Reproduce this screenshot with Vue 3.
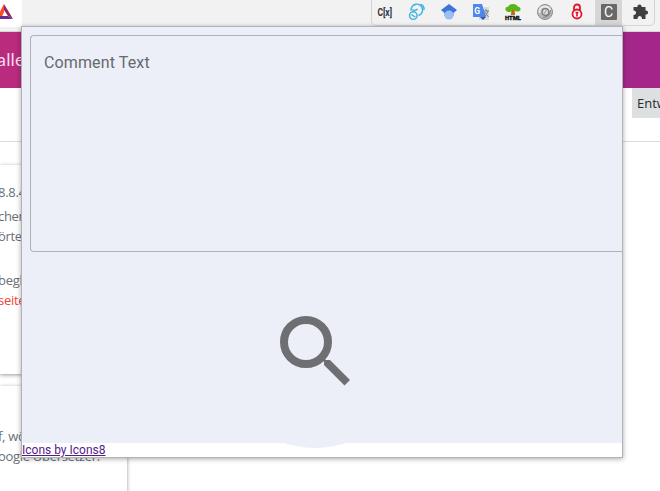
<script setup>
const release = [
  { text: '8.8.4', cls: 'version' },
  { text: 'chen', cls: 'l2' },
  { text: 'örter', cls: 'l3' },
  { text: 'begl', cls: 'l4' },
  { text: 'seite', cls: 'link' },
]
</script>

<template>
  <div class="screen">
    <header class="browser">
      <div class="address">
        <svg class="bat" width="14" height="22" viewBox="0 0 14 22">
          <path d="M4 4L-4 19H1L4 12Z" fill="#ff4b25" />
          <path d="M4 4L13 19L8 16L4 10Z" fill="#9e1f63" />
          <path d="M-4 19L0 16H8L13 19Z" fill="#662d91" />
        </svg>
      </div>
      <div class="extensions">
        <svg class="ext" viewBox="0 0 32 26">
          <text x="5.5" y="15.5" font-family="Roboto" font-size="11.5" font-weight="700" textLength="14.5" lengthAdjust="spacingAndGlyphs" fill="#30343c">C[x]</text>
        </svg>
        <svg class="ext" viewBox="0 0 32 26" fill="none" stroke="#35b2e2" stroke-width="1.4">
          <path d="M7 10.500A5.800 5.800 0 1 1 14.500 15.500" />
          <path d="M8 9.500Q11 11.500 13.500 9M16.500 4.500Q20.500 5.500 20 10" />
          <circle cx="9.300" cy="15.600" r="3.8" />
          <path d="M7.300 14.500L11.300 17" />
        </svg>
        <svg class="ext" viewBox="0 0 32 26">
          <path d="M13 4L21 10L17.5 13V16H8.5V13L5 10Z" fill="#3e74d7" />
          <circle cx="13" cy="15" r="4.6" fill="#9dbdf8" />
        </svg>
        <svg class="ext" viewBox="0 0 32 26">
          <rect x="11" y="7" width="10" height="13" fill="#d9dcdf" />
          <path d="M5 4H14L18 17H5Z" fill="#4d86ed" />
          <path d="M12 17H18L15 20Z" fill="#3451b5" />
          <text x="6.3" y="13.5" font-family="Roboto" font-size="8.5" font-weight="700" fill="#fff">G</text>
          <path d="M15.5 11H21M18 9V11M20 11Q19 15 16 17M16.5 12L20.5 17" fill="none" stroke="#687e85" />
        </svg>
        <svg class="ext" viewBox="0 0 32 26">
          <path d="M11.5 8H14.5L15 15H11Z" fill="#b96b16" />
          <path d="M5.5 10Q5 6.5 8.5 6.5Q9 4 13 4Q17 4 17.5 6.5Q21 7 20.5 10Q19 12.5 15 11L13 9.5L11 11.5Q7 13 5.5 10Z" fill="#5bb41a" />
          <text x="5" y="19.5" font-family="Roboto" font-size="6" font-weight="900" textLength="16" lengthAdjust="spacingAndGlyphs" fill="#111" stroke="#111" stroke-width=".3">HTML</text>
        </svg>
        <svg class="ext" viewBox="0 0 32 26">
          <circle cx="13" cy="12" r="7.5" fill="#b9b9b9" stroke="#8d8d8d" />
          <path d="M7.5 13Q7 6.5 13 6.5Q18 6.5 18.5 12" fill="none" stroke="#ededed" stroke-width="1.8" />
          <circle cx="13.5" cy="12" r="3.3" fill="#ddd" stroke="#777" stroke-width="1.2" />
          <path d="M18.5 10Q18 17 11 17.5" fill="none" stroke="#868686" stroke-width="1.2" />
          <path d="M11.5 14.5L15 9.5" stroke="#999" />
        </svg>
        <svg class="ext" viewBox="0 0 32 26">
          <path d="M10 10V7.5A3 3 0 0 1 16 7.5V10" fill="none" stroke="#e1142c" stroke-width="1.8" />
          <circle cx="13" cy="14" r="4.5" fill="#fff" stroke="#e1142c" stroke-width="1.8" />
          <path d="M11.5 12.5H14.5M13 12V16.5" stroke="#e1142c" stroke-width="1.7" />
        </svg>
        <div class="ext active"><b>C</b></div>
        <svg class="ext puzzle" viewBox="0 0 32 26">
          <path d="M12 7H15.5C14.5 3.5 20.5 3.5 19.500 7H23.500V10.500C27 10 27 15 23.500 14.500V19H20C20 15 15.500 15 15.500 19H11.500V15C15 14.500 15 11 11.500 10.500V7Z" fill="#3c4043" />
        </svg>
      </div>
    </header>

    <div class="banner">alle</div>
    <nav class="subnav"><span>Entw</span></nav>
    <main>
      <section class="card first">
        <p v-for="line in release" :key="line.cls" :class="line.cls">{{ line.text }}</p>
      </section>
      <section class="card second">
        <p>f, wört</p>
        <p>oogle Übersetzer.</p>
      </section>
    </main>

    <aside class="popup">
      <div class="body">
        <div class="field">Comment Text</div>
        <div class="search">
          <svg width="72" height="72" viewBox="0 0 72 72">
            <circle cx="27" cy="27" r="22" fill="none" stroke="#6e6f72" stroke-width="8" />
            <path d="M45 45H51L71 65L65.5 70.5L45 50Z" fill="#6e6f72" />
            <path d="M42 42L48 48" stroke="#6e6f72" stroke-width="2.5" />
          </svg>
        </div>
      </div>
      <footer><a>Icons by Icons8</a></footer>
    </aside>
  </div>
</template>

<style>
body { margin: 0; overflow: hidden; }
</style>

<style scoped>
* { box-sizing: border-box; }
.screen { position: relative; width: 660px; height: 491px; overflow: hidden; background: #fff; font-family: Roboto, sans-serif; }
.browser { display: flex; justify-content: space-between; height: 32px; background: #f2f2f2; border-bottom: 1px solid #d5d5d5; }
.address { width: 22px; height: 27px; background: #fff; }
.bat { display: block; }
.extensions { display: flex; width: 284px; height: 26px; margin-right: 5px; border: 1px solid #d4d4d4; border-top: 0; border-radius: 0 0 5px 5px; overflow: hidden; }
.ext { display: block; flex: 0 0 32px; width: 32px; height: 26px; }
.active { display: flex; flex-basis: 27px; width: 27px; justify-content: center; align-items: center; margin-left: -1px; background: #d6d6d6; }
.active b { width: 16px; height: 16px; margin-bottom: 2px; border-radius: 1px; background: #686868; color: #fff; font-size: 14px; line-height: 16px; text-align: center; font-weight: 400; }
.banner { height: 56px; text-indent: -3px; background: linear-gradient(90deg, #ba2b7d, #a4268b); color: #f6deed; font: 18px/55px Lato, sans-serif; letter-spacing: .2px; }
.subnav { display: flex; justify-content: flex-end; height: 54px; border-bottom: 1px solid #d9dbdc; }
.subnav span { width: 28px; height: 30px; padding-left: 5px; overflow: hidden; background: #dce0e1; color: #252b30; font: 13px/30px "Open Sans", sans-serif; }
main { padding-top: 23px; }
.card { width: 127px; background: #fff; box-shadow: 0 1px 4px #999; color: #697078; font: 13px/20px "Open Sans", sans-serif; letter-spacing: -.3px; }
.card p { margin: 0; white-space: nowrap; text-indent: -2px; }
.first { height: 209px; padding-top: 17px; }
.first .version { margin-bottom: 4px; }
.first .l4 { margin-top: 24px; }
.first .link { color: #f44336; }
.second { height: 120px; margin-top: 12px; padding-top: 40px; }
.popup { position: absolute; left: 21px; top: 26px; width: 602px; height: 432px; border: 1px solid #b1b3b6; background: #fff; box-shadow: 0 1px 5px #0005; }
.body { height: 416px; padding: 8px 0 0 8px; background: #eceff7; }
.field { height: 217px; padding: 17px 13px; border: 1px solid #afb2b7; border-right: 0; border-radius: 4px 0 0 4px; color: #66696d; font-size: 16px; line-height: 19px; letter-spacing: .13px; }
.search { display: flex; justify-content: center; align-items: center; width: 196px; height: 196px; margin-left: 187px; border-radius: 50%; background: #eceff7; }
.search svg { transform: translateY(1px); }
footer { position: relative; height: 14px; font-size: 12px; line-height: 14px; }
footer a { color: #551a8b; text-decoration: underline; }
</style>
